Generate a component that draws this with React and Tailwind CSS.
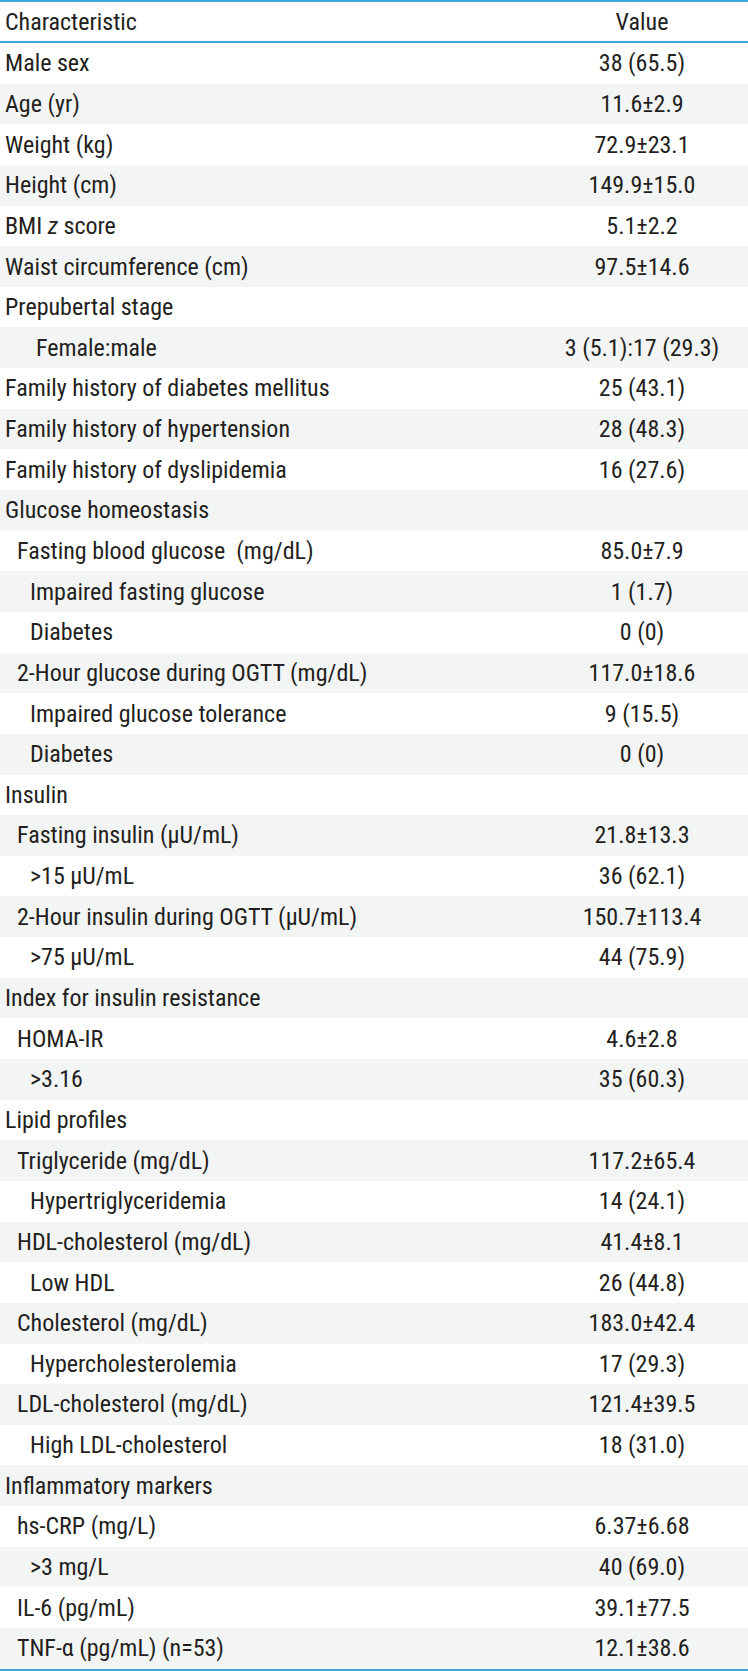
import React from 'react';

const rows = [
  { label: 'Male sex', value: '38 (65.5)' },
  { label: 'Age (yr)', value: '11.6±2.9' },
  { label: 'Weight (kg)', value: '72.9±23.1' },
  { label: 'Height (cm)', value: '149.9±15.0' },
  { label: 'BMI', italic: 'z', after: ' score', value: '5.1±2.2' },
  { label: 'Waist circumference (cm)', value: '97.5±14.6' },
  { label: 'Prepubertal stage', value: '' },
  { label: 'Female:male', value: '3 (5.1):17 (29.3)', indent: 'pl-[36px]' },
  { label: 'Family history of diabetes mellitus', value: '25 (43.1)' },
  { label: 'Family history of hypertension', value: '28 (48.3)' },
  { label: 'Family history of dyslipidemia', value: '16 (27.6)' },
  { label: 'Glucose homeostasis', value: '' },
  { label: 'Fasting blood glucose  (mg/dL)', value: '85.0±7.9', level: 1 },
  { label: 'Impaired fasting glucose', value: '1 (1.7)', level: 2 },
  { label: 'Diabetes', value: '0 (0)', level: 2 },
  { label: '2-Hour glucose during OGTT (mg/dL)', value: '117.0±18.6', level: 1 },
  { label: 'Impaired glucose tolerance', value: '9 (15.5)', level: 2 },
  { label: 'Diabetes', value: '0 (0)', level: 2 },
  { label: 'Insulin', value: '' },
  { label: 'Fasting insulin (μU/mL)', value: '21.8±13.3', level: 1 },
  { label: '>15 μU/mL', value: '36 (62.1)', level: 2 },
  { label: '2-Hour insulin during OGTT (μU/mL)', value: '150.7±113.4', level: 1 },
  { label: '>75 μU/mL', value: '44 (75.9)', level: 2 },
  { label: 'Index for insulin resistance', value: '' },
  { label: 'HOMA-IR', value: '4.6±2.8', level: 1 },
  { label: '>3.16', value: '35 (60.3)', level: 2 },
  { label: 'Lipid profiles', value: '' },
  { label: 'Triglyceride (mg/dL)', value: '117.2±65.4', level: 1 },
  { label: 'Hypertriglyceridemia', value: '14 (24.1)', level: 2 },
  { label: 'HDL-cholesterol (mg/dL)', value: '41.4±8.1', level: 1 },
  { label: 'Low HDL', value: '26 (44.8)', level: 2 },
  { label: 'Cholesterol (mg/dL)', value: '183.0±42.4', level: 1 },
  { label: 'Hypercholesterolemia', value: '17 (29.3)', level: 2 },
  { label: 'LDL-cholesterol (mg/dL)', value: '121.4±39.5', level: 1 },
  { label: 'High LDL-cholesterol', value: '18 (31.0)', level: 2 },
  { label: 'Inflammatory markers', value: '' },
  { label: 'hs-CRP (mg/L)', value: '6.37±6.68', level: 1 },
  { label: '>3 mg/L', value: '40 (69.0)', level: 2 },
  { label: 'IL-6 (pg/mL)', value: '39.1±77.5', level: 1 },
  { label: 'TNF-α (pg/mL) (n=53)', value: '12.1±38.6', level: 1 },
];

const indentFor = (row) => {
  if (row.indent) return row.indent;
  if (row.level === 1) return 'pl-[17px]';
  if (row.level === 2) return 'pl-[30px]';
  return 'pl-[5px]';
};

const App = () => {
  return (
    <div className="w-[748px] bg-white text-[#231f20] text-[24px] leading-none font-stretch-semi-condensed" style={{ fontFamily: '"Roboto Condensed", Roboto, sans-serif' }}>
      {/* Header */}
      <div className="flex items-center h-[43px] border-t-2 border-b-2 border-[#3ea8dc]">
        <div className="flex-1 pl-[5px]">Characteristic</div>
        <div className="w-[212px] text-center">Value</div>
      </div>

      {rows.map((row, i) => (
        <div
          key={i}
          className={`flex items-center h-[40.65px] ${i % 2 === 1 ? 'bg-[#f3f4f4]' : 'bg-white'}`}
        >
          <div className={`flex-1 whitespace-pre ${indentFor(row)}`}>
            {row.label}
            {row.italic && <span className="italic">{' ' + row.italic}</span>}
            {row.after}
          </div>
          <div className="w-[212px] text-center">{row.value}</div>
        </div>
      ))}

      <div className="h-[2px] bg-[#3ea8dc]"></div>
    </div>
  );
};

export default App;
